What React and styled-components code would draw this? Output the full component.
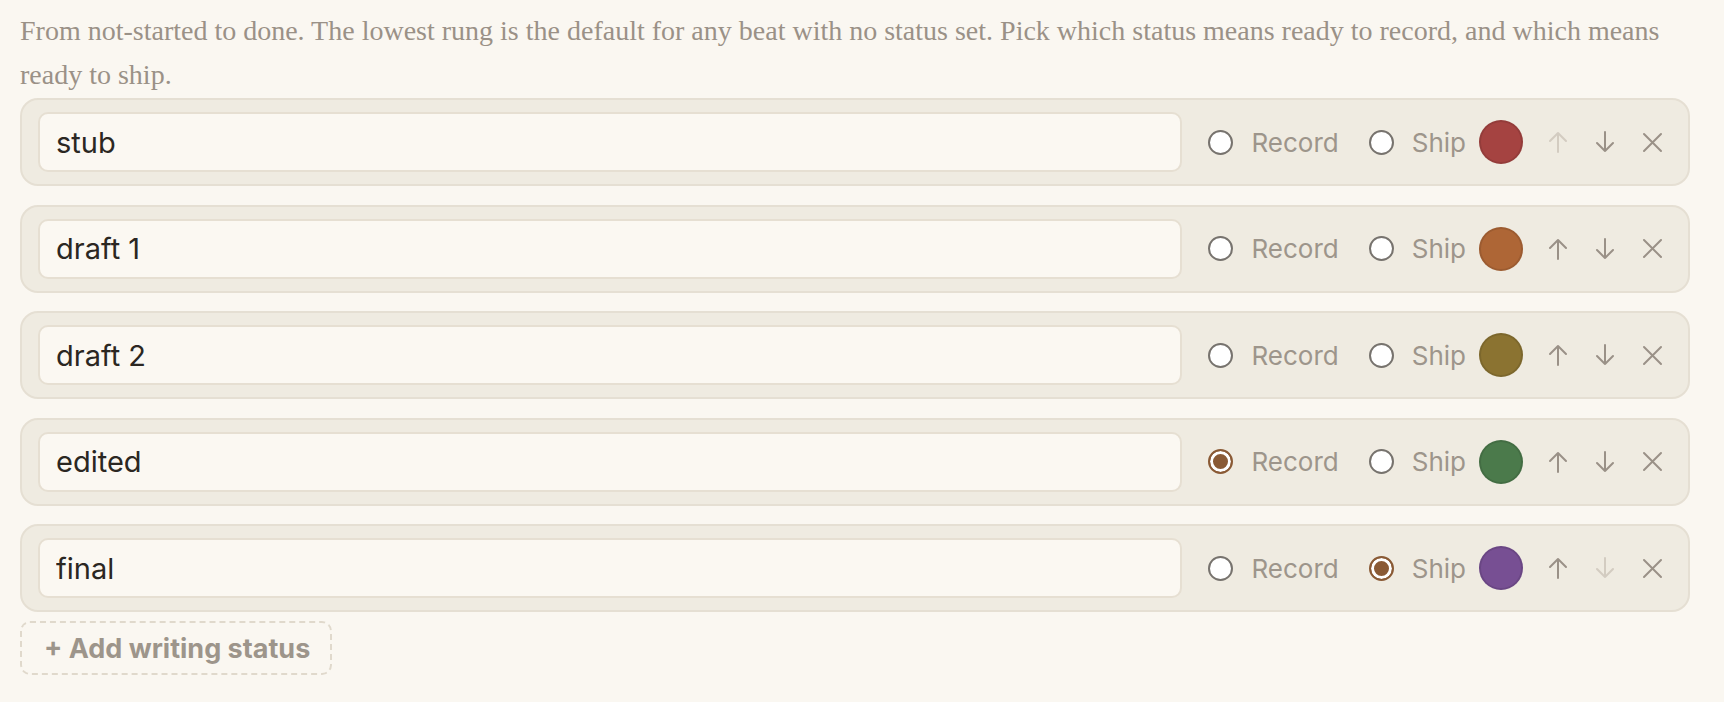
import styled, { createGlobalStyle } from "styled-components";

const GlobalStyle = createGlobalStyle`
  html, body {
    margin: 0;
    padding: 0;
    background: #faf7f1;
  }
  * {
    box-sizing: border-box;
  }
`;

const Page = styled.div`
  padding: 9px 34px 0 20px;
  font-family: Inter, "Liberation Sans", sans-serif;
`;

const Description = styled.p`
  margin: 0 0 1px;
  font-family: "Liberation Serif", serif;
  font-size: 28px;
  line-height: 44px;
  color: #9a9187;
`;

const List = styled.div`
  display: flex;
  flex-direction: column;
  gap: 18.5px;
`;

const Row = styled.div`
  display: flex;
  align-items: center;
  height: 88px;
  padding: 12px 14px 12px 16px;
  background: #efebe1;
  border: 2px solid #e5dfd3;
  border-radius: 18px;
`;

const NameInput = styled.input`
  flex: 1;
  min-width: 0;
  height: 60px;
  padding: 0 16px;
  font-family: Inter, "Liberation Sans", sans-serif;
  font-size: 29px;
  color: #2b2722;
  background: #fbf8f2;
  border: 2px solid #e6dfd2;
  border-radius: 10px;
  outline: none;
`;

const Choice = styled.label`
  display: flex;
  align-items: center;
  gap: 18px;
  margin-left: ${(p) => p.$offset}px;
  font-size: 26px;
  color: #9d958b;
  cursor: pointer;
`;

const Radio = styled.input`
  appearance: none;
  margin: 0;
  width: 25px;
  height: 25px;
  border-radius: 50%;
  background: #fff;
  border: 2px solid #77736e;
  cursor: pointer;

  &:checked {
    border-color: #8a5a35;
    background: #8a5a35;
    box-shadow: inset 0 0 0 3px #fff;
  }
`;

const Swatch = styled.button`
  width: 44px;
  height: 44px;
  margin-left: 13px;
  padding: 0;
  border-radius: 50%;
  border: 2px solid rgba(0, 0, 0, 0.1);
  background: ${(p) => p.$color};
  cursor: pointer;
`;

const Actions = styled.div`
  display: flex;
  gap: 3px;
  margin-left: 13px;
`;

const IconButton = styled.button`
  width: 44px;
  height: 44px;
  padding: 0;
  display: flex;
  align-items: center;
  justify-content: center;
  background: none;
  border: none;
  color: ${(p) => (p.disabled ? "#d3ccc1" : "#9a9187")};
  cursor: ${(p) => (p.disabled ? "default" : "pointer")};
`;

const AddButton = styled.button`
  margin-top: 9px;
  width: 312px;
  height: 54px;
  padding: 0 22px;
  text-align: left;
  white-space: nowrap;
  font-family: Inter, "Liberation Sans", sans-serif;
  font-size: 27px;
  font-weight: 700;
  color: #9d958b;
  background: transparent;
  border: 2px dashed #e0d9cc;
  border-radius: 10px;
  cursor: pointer;
`;

const ArrowUp = () => (
  <svg width="20" height="22" viewBox="0 0 20 22" fill="none" stroke="currentColor" strokeWidth="2" strokeLinecap="round" strokeLinejoin="round">
    <path d="M10 21V2M2 10l8-8 8 8" />
  </svg>
);

const ArrowDown = () => (
  <svg width="20" height="22" viewBox="0 0 20 22" fill="none" stroke="currentColor" strokeWidth="2" strokeLinecap="round" strokeLinejoin="round">
    <path d="M10 1v19M2 12l8 8 8-8" />
  </svg>
);

const Close = () => (
  <svg width="21" height="21" viewBox="0 0 21 21" fill="none" stroke="currentColor" strokeWidth="2" strokeLinecap="round">
    <path d="M2 2l17 17M19 2L2 19" />
  </svg>
);

const statuses = [
  { name: "stub", color: "#a54341" },
  { name: "draft 1", color: "#ae6636" },
  { name: "draft 2", color: "#8b7331" },
  { name: "edited", color: "#4b7a4b", record: true },
  { name: "final", color: "#774f93", ship: true },
];

export default function App() {
  return (
    <Page>
      <GlobalStyle />
      <Description>
        From not-started to done. The lowest rung is the default for any beat
        with no status set. Pick which status means ready to record, and which
        means ready to ship.
      </Description>
      <List>
        {statuses.map((s, i) => (
          <Row key={s.name}>
            <NameInput defaultValue={s.name} />
            <Choice $offset={26}>
              <Radio type="radio" name="record" defaultChecked={!!s.record} />
              Record
            </Choice>
            <Choice $offset={30}>
              <Radio type="radio" name="ship" defaultChecked={!!s.ship} />
              Ship
            </Choice>
            <Swatch $color={s.color} aria-label="Colour" />
            <Actions>
              <IconButton disabled={i === 0} aria-label="Move up">
                <ArrowUp />
              </IconButton>
              <IconButton disabled={i === statuses.length - 1} aria-label="Move down">
                <ArrowDown />
              </IconButton>
              <IconButton aria-label="Remove">
                <Close />
              </IconButton>
            </Actions>
          </Row>
        ))}
      </List>
      <AddButton>+ Add writing status</AddButton>
    </Page>
  );
}
